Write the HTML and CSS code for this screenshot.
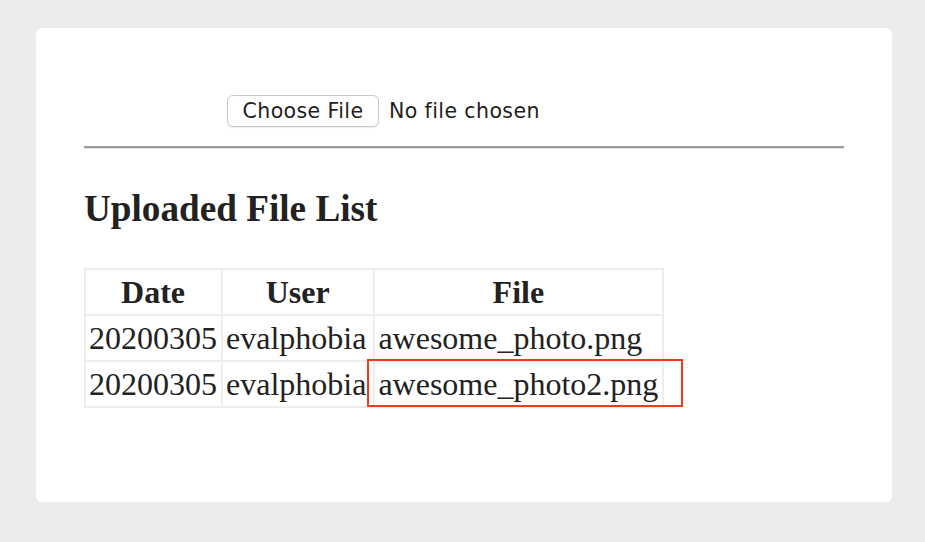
FILE: index.html
```html
<!DOCTYPE html>
<html>
<head>
<meta charset="utf-8">
<link rel="stylesheet" href="styles.css">
</head>
<body>
<main class="card">
  <form class="upload">
    <button type="button" class="choose">Choose File</button>
    <span class="status">No file chosen</span>
  </form>
  <hr class="rule">
  <h2 class="title">Uploaded File List</h2>
  <div class="table-wrap">
    <table class="files">
      <thead>
        <tr><th>Date</th><th>User</th><th>File</th></tr>
      </thead>
      <tbody>
        <tr><td>20200305</td><td>evalphobia</td><td>awesome_photo.png</td></tr>
        <tr><td>20200305</td><td>evalphobia</td><td>awesome_photo2.png</td></tr>
      </tbody>
    </table>
    <div class="highlight"></div>
  </div>
</main>
</body>
</html>
```
FILE: styles.css
```css
html, body {
  margin: 0;
  padding: 0;
}
body {
  background: #ececef;
  width: 925px;
  height: 542px;
  overflow: hidden;
  color: #222;
}
.card {
  box-sizing: border-box;
  margin: 28px 0 0 36px;
  width: 856px;
  height: 474px;
  background: #fff;
  border-radius: 6px;
  padding: 67px 48px 0 48px;
}
.upload {
  display: flex;
  align-items: center;
  height: 32px;
  padding-left: 143px;
  font-family: "DejaVu Sans", "Liberation Sans", sans-serif;
  font-size: 20.5px;
  letter-spacing: 0.4px;
  color: #1e1e1e;
}
.choose {
  box-sizing: border-box;
  height: 32px;
  width: 152px;
  padding: 0;
  font: inherit;
  letter-spacing: inherit;
  color: inherit;
  background: #fff;
  border: 1px solid #c9c9c9;
  border-radius: 6px;
  box-shadow: 0 1px 1px rgba(0,0,0,0.08);
}
.status {
  margin-left: 10px;
}
.rule {
  margin: 19px 0 0 0;
  height: 0;
  border: 0;
  border-top: 2px solid #9a9a9a;
  border-bottom: 1px solid #e4e4e4;
}
.title {
  margin: 38px 0 0 0;
  font-family: "Liberation Serif", "Times New Roman", serif;
  font-size: 37.2px;
  line-height: 44px;
  font-weight: bold;
  color: #222;
}
.table-wrap {
  position: relative;
  margin-top: 37px;
  width: max-content;
}
.files {
  border-collapse: collapse;
  font-family: "Liberation Serif", "Times New Roman", serif;
  font-size: 32px;
  color: #222;
}
.files th, .files td {
  border: 2px solid #ededed;
  padding: 1px 4px 1px 3px;
  line-height: 42px;
}
.files th {
  font-weight: bold;
  text-align: center;
}
.files td {
  text-align: left;
}
.files td:nth-child(2) {
  padding-right: 7px;
}
.highlight {
  position: absolute;
  left: 283px;
  top: 91px;
  width: 316px;
  height: 48px;
  box-sizing: border-box;
  border: 2px solid #f23a1c;
}
```
